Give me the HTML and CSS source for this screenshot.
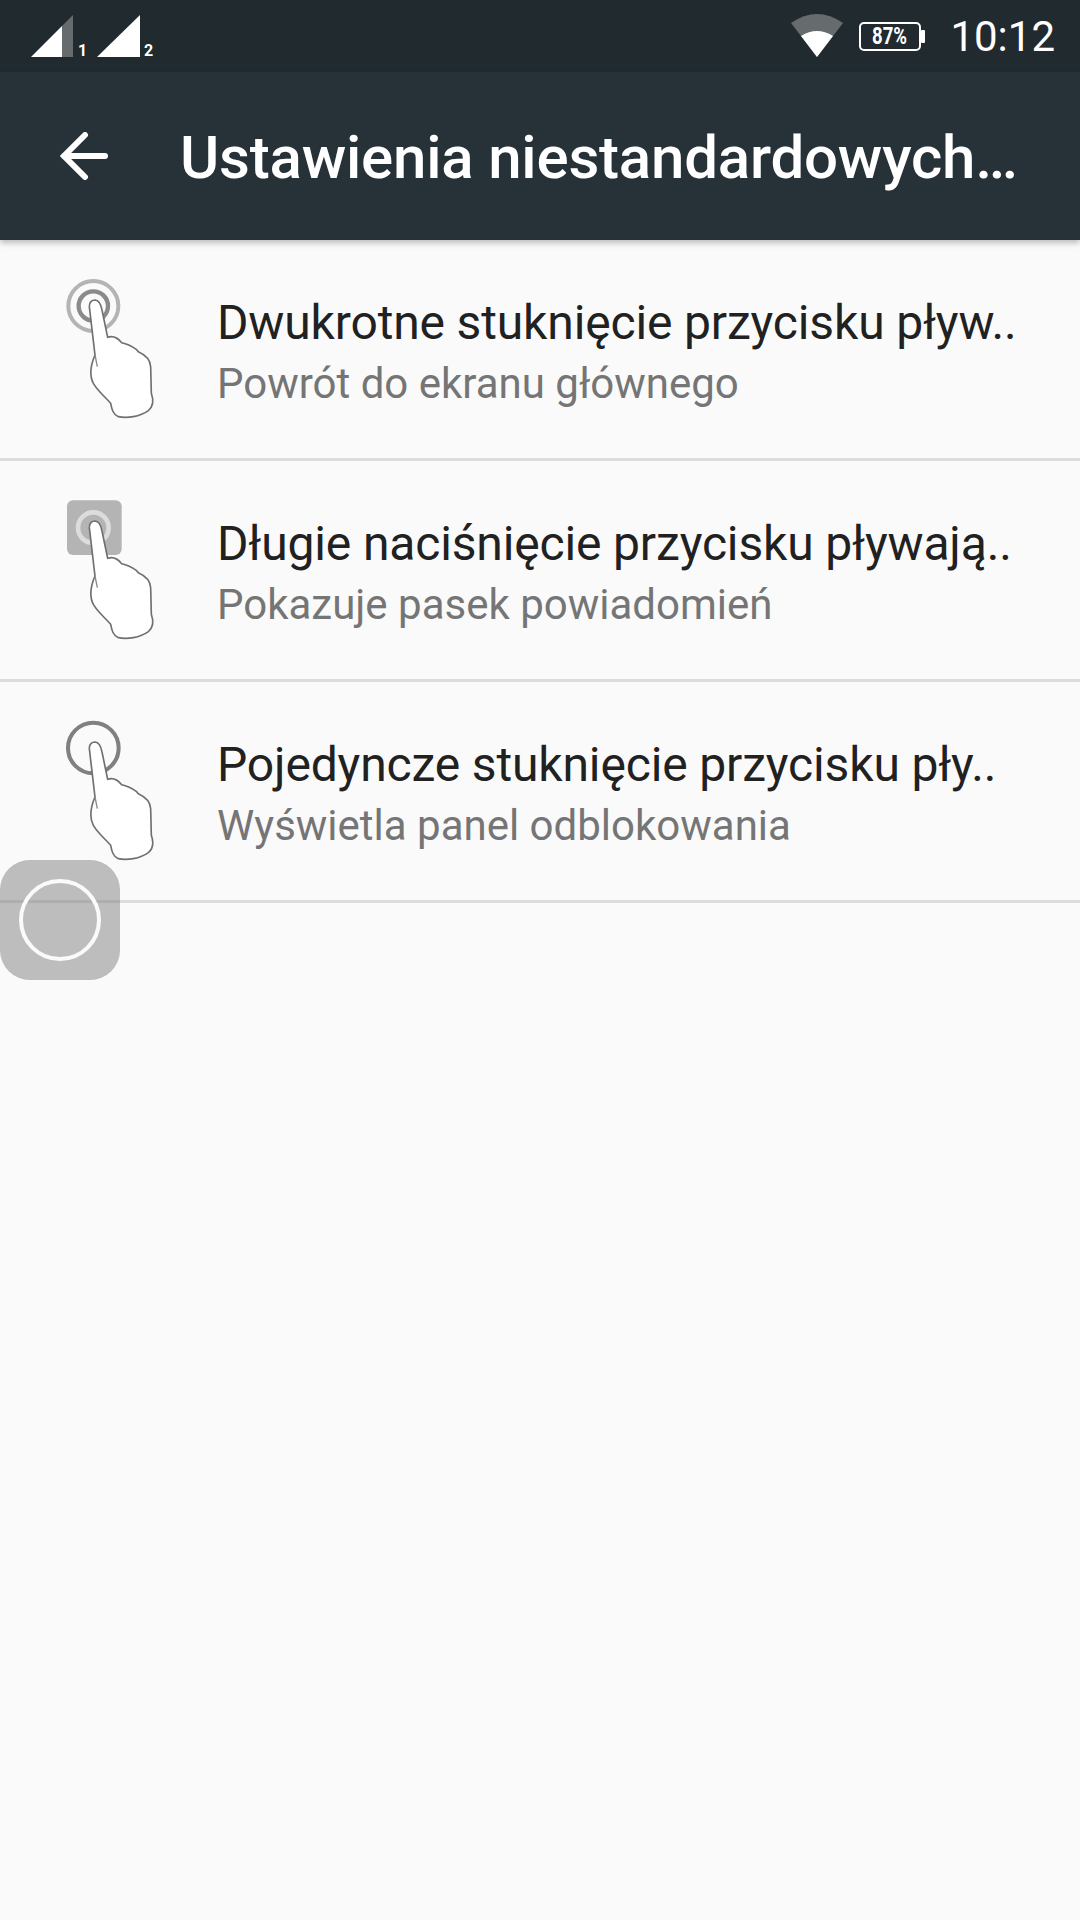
FILE: index.html
```html
<!DOCTYPE html>
<html lang="pl">
<head>
  <meta charset="UTF-8" />
  <meta name="viewport" content="width=device-width, initial-scale=1.0"/>
  <title>Ustawienia niestandardowych</title>
  <link rel="stylesheet" href="styles.css">
</head>
<body>
  <svg class="defs" width="0" height="0">
    <symbol id="hand" viewBox="0 0 420 570">
      <path d="M148 140 C147 126 156 120 165 120 C177 121 183 133 186 150 L203 232 C216 227 232 232 245 248 C260 253 282 258 295 275 C315 284 331 296 332 320 L334 400 C341 420 339 440 325 452 C300 470 260 476 235 470 C218 463 215 445 212 430 C195 410 175 395 160 370 C147 345 150 320 165 285 Z" fill="#fff" stroke="#707070" stroke-width="5" stroke-linejoin="round"/>
      <path d="M165 285 L172 320" fill="none" stroke="#8a8a8a" stroke-width="4"/>
    </symbol>
  </svg>

  <div class="status-bar">
    <svg class="sim-icons" width="160" height="72" viewBox="0 0 160 72">
      <path d="M31 57 L62 26 V57 Z" fill="#fff"/>
      <path d="M62 26 L73 15 V57 H62 Z" fill="#666b6e"/>
      <text x="78" y="56" class="sim-num">1</text>
      <path d="M97 57 L140 15 V57 Z" fill="#fff"/>
      <text x="144" y="56" class="sim-num">2</text>
    </svg>
    <div class="status-right">
      <svg class="wifi" width="52" height="44" viewBox="0 0 52 44">
        <path d="M26 43 L0 9 Q26 -9 52 9 Z" fill="#666b6e"/>
        <path d="M26 43 L10 22 Q26 12 42 22 Z" fill="#fff"/>
      </svg>
      <svg class="battery" width="66" height="30" viewBox="0 0 66 30">
        <rect x="1" y="1" width="60" height="27" rx="4" fill="none" stroke="#fff" stroke-width="2"/>
        <rect x="62" y="8" width="4" height="13" rx="1" fill="#fff"/>
        <text x="13" y="22" class="batt-text" textLength="35" lengthAdjust="spacingAndGlyphs">87%</text>
      </svg>
      <span class="clock">10:12</span>
    </div>
  </div>

  <div class="toolbar">
    <svg class="back" width="48" height="48" viewBox="0 0 48 48">
      <path d="M4 24 H45 M25 3 L4 24 L25 45" fill="none" stroke="#fff" stroke-width="6" stroke-linecap="round"/>
    </svg>
    <h1 class="toolbar-title">Ustawienia niestandardowych…</h1>
  </div>

  <div class="list">
    <div class="row">
      <svg class="gesture" width="140" height="190" viewBox="0 0 420 570">
        <circle cx="160" cy="138" r="75" fill="none" stroke="#b4b4b4" stroke-width="12"/>
        <circle cx="160" cy="138" r="44" fill="none" stroke="#8a8a8a" stroke-width="13"/>
        <use href="#hand" width="420" height="570"/>
      </svg>
      <div class="row-text">
        <div class="row-title">Dwukrotne stuknięcie przycisku pływ..</div>
        <div class="row-sub">Powrót do ekranu głównego</div>
      </div>
    </div>
    <div class="row">
      <svg class="gesture" width="140" height="190" viewBox="0 0 420 570">
        <rect x="81" y="58" width="164" height="164" rx="18" fill="#b4b4b4"/>
        <circle cx="160" cy="140" r="46" fill="none" stroke="#dcdcdc" stroke-width="14"/>
        <use href="#hand" width="420" height="570"/>
      </svg>
      <div class="row-text">
        <div class="row-title">Długie naciśnięcie przycisku pływają..</div>
        <div class="row-sub">Pokazuje pasek powiadomień</div>
      </div>
    </div>
    <div class="row">
      <svg class="gesture" width="140" height="190" viewBox="0 0 420 570">
        <circle cx="160" cy="138" r="76" fill="none" stroke="#808080" stroke-width="12"/>
        <use href="#hand" width="420" height="570"/>
      </svg>
      <div class="row-text">
        <div class="row-title">Pojedyncze stuknięcie przycisku pły..</div>
        <div class="row-sub">Wyświetla panel odblokowania</div>
      </div>
    </div>
  </div>

  <div class="float-btn"><div class="float-ring"></div></div>
</body>
</html>
```

FILE: styles.css
```css
* {
  box-sizing: border-box;
}

html, body {
  margin: 0;
  padding: 0;
}

body {
  width: 1080px;
  height: 1920px;
  overflow: hidden;
  position: relative;
  background-color: #fafafa;
  font-family: Roboto, "Noto Sans", sans-serif;
}

.defs {
  position: absolute;
}

.status-bar {
  height: 72px;
  background-color: #212a2e;
  display: flex;
  align-items: center;
  padding-right: 25px;
}

.sim-icons {
  flex: none;
}

.sim-num {
  font-size: 16px;
  font-weight: 700;
  fill: #fff;
}

.status-right {
  margin-left: auto;
  display: flex;
  align-items: center;
}

.battery {
  margin-left: 16px;
  margin-top: 1px;
}

.batt-text {
  font-size: 23px;
  font-weight: 700;
  fill: #fff;
}

.clock {
  margin-left: 25px;
  font-size: 42px;
  color: #fff;
}

.toolbar {
  height: 168px;
  background-color: #263238;
  display: flex;
  align-items: center;
  padding-left: 60px;
  box-shadow: 0 3px 6px rgba(0,0,0,0.25);
  position: relative;
}

.back {
  flex: none;
}

.toolbar-title {
  margin: 3px 0 0 72px;
  font-size: 60px;
  font-weight: 500;
  color: #fff;
  white-space: nowrap;
  letter-spacing: -0.2px;
}

.row {
  height: 221px;
  border-bottom: 3px solid #dcdcdc;
  display: flex;
  align-items: flex-start;
  padding-left: 40px;
}

.gesture {
  flex: none;
  margin-top: 20px;
}

.row-text {
  margin-left: 37px;
  padding-top: 53px;
}

.row-title {
  font-size: 48px;
  line-height: 60px;
  color: #212121;
  white-space: nowrap;
  letter-spacing: -0.15px;
}

.row-sub {
  margin-top: 1px;
  font-size: 42px;
  line-height: 60px;
  color: #757575;
  white-space: nowrap;
}

/* floating button sits over the list */
.float-btn {
  position: absolute;
  left: 0;
  top: 860px;
  width: 120px;
  height: 120px;
  border-radius: 30px;
  background-color: rgba(128,128,128,0.5);
  display: flex;
  align-items: center;
  justify-content: center;
}

.float-ring {
  width: 82px;
  height: 82px;
  border: 4px solid #fafafa;
  border-radius: 50%;
}
```
